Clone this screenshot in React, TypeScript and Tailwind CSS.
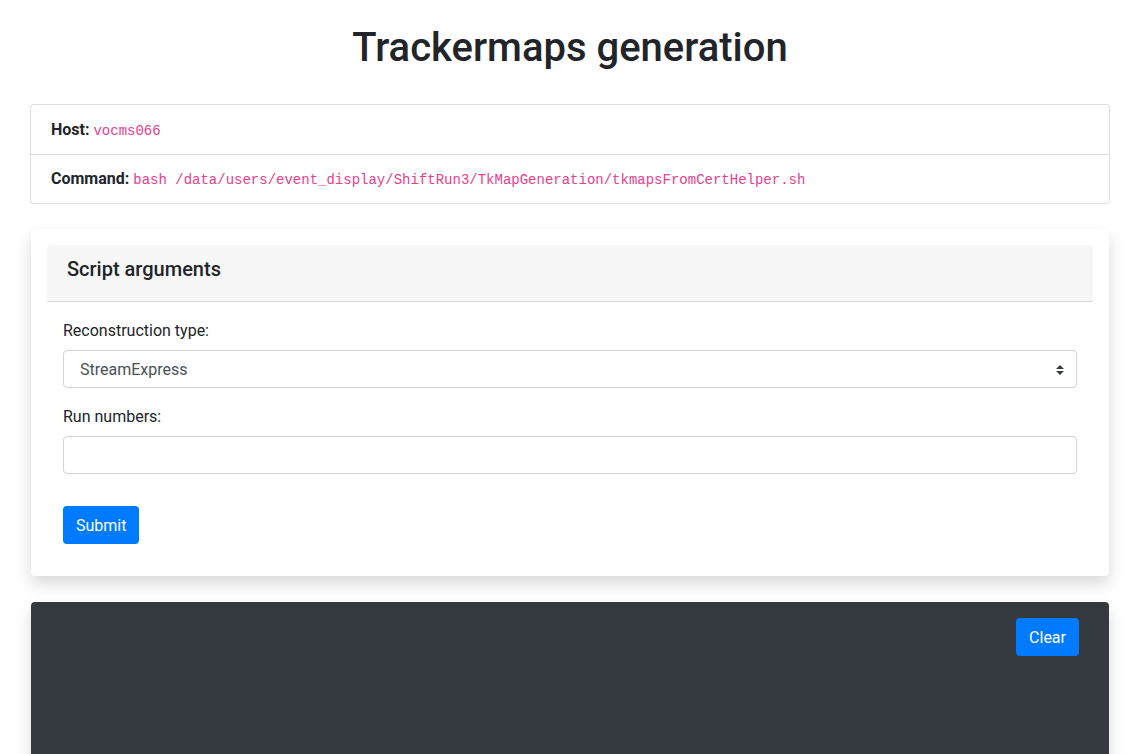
const mono = "font-['Liberation_Mono',monospace] text-[14px] text-[#e83e8c]"

function InfoCard() {
  return (
    <div className="mx-[30px] rounded border border-black/[0.125] bg-white">
      <div className="px-5 pt-[13px] pb-[11px] leading-6">
        <span className="font-bold">Host:</span> <code className={mono}>vocms066</code>
      </div>
      <div className="border-t border-black/[0.125] px-5 pt-3 pb-[11px] leading-6">
        <span className="font-bold">Command:</span>{' '}
        <code className={mono}>
          bash /data/users/event_display/ShiftRun3/TkMapGeneration/tkmapsFromCertHelper.sh
        </code>
      </div>
    </div>
  )
}

function SelectArrows() {
  return (
    <svg width="8" height="10" viewBox="0 0 4 5" className="shrink-0">
      <path fill="#343a40" d="M2 0L0 2h4zm0 5L0 3h4z" />
    </svg>
  )
}

function ArgumentsCard() {
  return (
    <div className="mx-[31px] mt-[25px] rounded bg-white p-4 shadow-[0_0.5rem_1rem_rgba(0,0,0,0.15)]">
      <div className="rounded-t bg-[#f7f7f7] px-5 py-3 border-b border-black/[0.125]">
        <h5 className="mb-2 text-[20px] font-medium leading-6">Script arguments</h5>
      </div>
      <div className="p-4">
        <div className="mb-4">
          <label className="mb-[7px] block pt-px leading-6">Reconstruction type:</label>
          <div className="flex h-[38px] items-center justify-between rounded border border-[#ced4da] pl-4 pr-3 pt-px text-[#495057]">
            <span>StreamExpress</span>
            <SelectArrows />
          </div>
        </div>
        <div className="mb-4">
          <label className="mb-[7px] block pt-px leading-6">Run numbers:</label>
          <input
            type="text"
            className="block h-[38px] w-full rounded border border-[#ced4da] px-3 text-[#495057] outline-none"
          />
        </div>
        <button className="mt-4 h-[38px] rounded bg-[#007bff] px-[13px] pt-px leading-6 text-white">
          Submit
        </button>
      </div>
    </div>
  )
}

function OutputPanel() {
  return (
    <div className="mx-[31px] mt-[26px] h-[160px] rounded-t bg-[#343a40] pt-4 pr-[30px] shadow-[0_0.5rem_1rem_rgba(0,0,0,0.15)]">
      <div className="flex justify-end">
        <button className="h-[38px] rounded bg-[#007bff] px-[13px] pt-px leading-6 text-white">
          Clear
        </button>
      </div>
    </div>
  )
}

export default function App() {
  return (
    <div className="h-[754px] overflow-hidden bg-white font-['Roboto',sans-serif] text-base text-[#212529]">
      <h1 className="pt-6 pb-8 text-center text-[40px] font-medium leading-[48px]">
        Trackermaps generation
      </h1>
      <InfoCard />
      <ArgumentsCard />
      <OutputPanel />
    </div>
  )
}
